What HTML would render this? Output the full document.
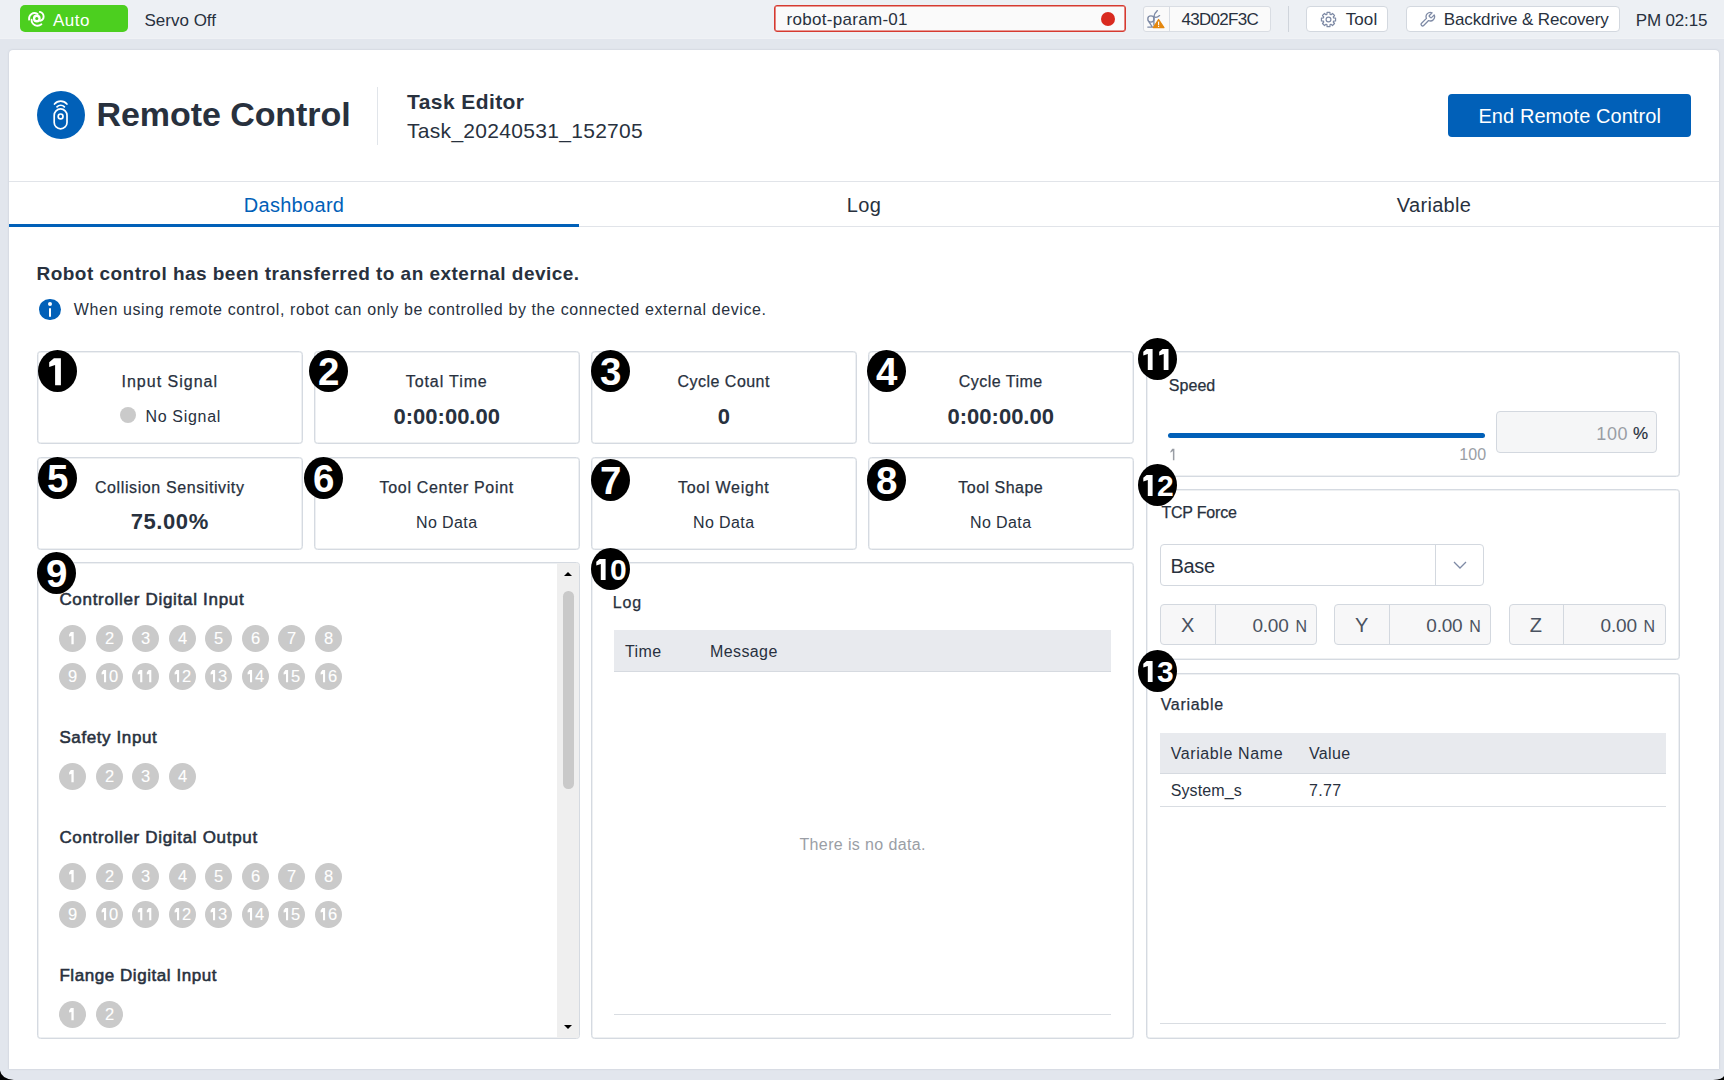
<!DOCTYPE html>
<html><head><meta charset="utf-8">
<style>
*{box-sizing:border-box;margin:0;padding:0}
html,body{width:1724px;height:1080px;overflow:hidden;background:#e2e6ed;font-family:"Liberation Sans",sans-serif;color:#28313e}
.a{position:absolute}
.t{position:absolute;white-space:nowrap}
.card{position:absolute;border:1px solid #d5dae1;box-shadow:inset 0 0 0 0.5px #dde1e6;border-radius:3.5px;background:#fff}
.dot{position:absolute;width:27.5px;height:27.5px;border-radius:50%;background:#cacaca;color:#fff;font-size:16px;line-height:28.5px;text-align:center}
.btn{position:absolute;background:#fff;border:1px solid #d3d8df;border-radius:4px}
.hline{position:absolute;height:1px;background:#e1e4e9}
.med{-webkit-text-stroke:0.25px #28313e}
.semi{-webkit-text-stroke:0.55px #28313e}
</style></head><body>
<div class="a" style="left:0;top:0;width:1724px;height:39px;background:#edf0f4"></div>
<div class="a" style="left:0;top:38px;width:1724px;height:1px;background:#f0f2f5"></div>
<div class="a" style="left:20px;top:5px;width:108px;height:27.3px;background:#4ccf1f;border-radius:5px"></div>
<svg class="a" style="left:24px;top:8px" width="26" height="22" viewBox="0 0 26 22" fill="none" stroke="#fff" stroke-width="1.9" stroke-linecap="round">
  <circle cx="12.8" cy="10.5" r="2.75" stroke-width="2.3"/>
  <path d="M5.1 11.6 C4.6 6.6 9.2 3.4 13.6 6.0"/>
  <path d="M15.8 3.9 C20.6 5.2 21.0 11.4 16.2 12.8"/>
  <path d="M7.6 11.6 C7.4 16.8 13.2 19.6 17.4 16.3"/>
</svg>
<div class="t" style="left:53.00px;top:12.00px;font-size:17px;line-height:17px;letter-spacing:0.5px;color:#fff;">Auto</div>
<div class="t" style="left:144.50px;top:12.00px;font-size:17px;line-height:17px;">Servo Off</div>
<div class="a" style="left:774px;top:5px;width:351.5px;height:27px;border:1px solid #d63a30;box-shadow:inset 0 0 0 0.6px #d63a30;border-radius:3px;background:#fafafa"></div>
<div class="t" style="left:786.50px;top:11.00px;font-size:17px;line-height:17px;letter-spacing:0.3px;">robot-param-01</div>
<div class="a" style="left:1100.6px;top:11.8px;width:14px;height:14px;border-radius:50%;background:#d92a1f"></div>
<div class="a" style="left:1142.5px;top:6px;width:128.5px;height:25.5px;border:1px solid #d9dde3;border-radius:3px;background:#fafafa"></div>
<div class="a" style="left:1169px;top:6px;width:1px;height:25.5px;background:#d9dde3"></div>
<svg class="a" style="left:1142px;top:6px" width="30" height="26" viewBox="0 0 30 26" fill="none" stroke="#7e8aa5" stroke-width="1.35" stroke-linecap="round">
  <circle cx="8.9" cy="13" r="3.1"/>
  <path d="M5.8 21.1 H10.8 M7 15.8 L10.3 21 M11.9 10.5 V19"/>
  <path d="M11.9 10.5 C12.2 8.2 13.6 6.3 15.4 4.6 M11.9 10.5 C13.4 12 15.5 11.4 17.6 9.6"/>
</svg>
<svg class="a" style="left:1142px;top:6px" width="30" height="26" viewBox="0 0 30 26">
  <path d="M16.6 13.5 L21.9 21.6 H11.3 Z" fill="#e4870e" stroke="#e4870e" stroke-width="1.3" stroke-linejoin="round"/>
  <rect x="16.05" y="15.6" width="1.1" height="3.7" fill="#fff"/><rect x="16.05" y="20.0" width="1.1" height="1.0" fill="#fff"/>
</svg>
<div class="t" style="left:1181.50px;top:11.00px;font-size:17px;line-height:17px;letter-spacing:-0.72px;">43D02F3C</div>
<div class="a" style="left:1288px;top:5.5px;width:1px;height:26.5px;background:#cfd4db"></div>
<div class="btn" style="left:1305.5px;top:5.5px;width:82.5px;height:26px"></div>
<svg class="a" style="left:1319.5px;top:10.5px" width="17" height="17" viewBox="0 0 24 24" fill="none" stroke="#7e8aa5" stroke-width="1.7" stroke-linejoin="round">
<path d="M19.26 9.75 L22.00 9.97 L22.00 14.03 L19.26 14.25 L18.72 15.55 L20.50 17.64 L17.64 20.50 L15.55 18.72 L14.25 19.26 L14.03 22.00 L9.97 22.00 L9.75 19.26 L8.45 18.72 L6.36 20.50 L3.50 17.64 L5.28 15.55 L4.74 14.25 L2.00 14.03 L2.00 9.97 L4.74 9.75 L5.28 8.45 L3.50 6.36 L6.36 3.50 L8.45 5.28 L9.75 4.74 L9.97 2.00 L14.03 2.00 L14.25 4.74 L15.55 5.28 L17.64 3.50 L20.50 6.36 L18.72 8.45Z"/>
<circle cx="12" cy="12" r="3.4"/>
</svg>
<div class="t" style="left:1345.70px;top:11.00px;font-size:17px;line-height:17px;letter-spacing:0.1px;">Tool</div>
<div class="btn" style="left:1405.5px;top:5.5px;width:214px;height:26px"></div>
<svg class="a" style="left:1419px;top:10.5px" width="17" height="17" viewBox="0 0 24 24" fill="none" stroke="#7e8aa5" stroke-width="1.8" stroke-linecap="round" stroke-linejoin="round">
<path d="M14.7 6.3a1 1 0 0 0 0 1.4l1.6 1.6a1 1 0 0 0 1.4 0l3.77-3.77a6 6 0 0 1-7.94 7.94l-6.91 6.91a2.12 2.12 0 0 1-3-3l6.91-6.91a6 6 0 0 1 7.94-7.94l-3.76 3.76z"/>
</svg>
<div class="t" style="left:1443.80px;top:11.00px;font-size:17px;line-height:17px;letter-spacing:-0.12px;">Backdrive &amp; Recovery</div>
<div class="t" style="left:1635.70px;top:12.00px;font-size:17px;line-height:17px;letter-spacing:-0.15px;">PM 02:15</div>
<div class="a" style="left:9px;top:50px;width:1710px;height:1019px;background:#fff;border-radius:4px 4px 0 0;box-shadow:0 0 2px rgba(120,130,150,.35)"></div>
<div class="a" style="left:37px;top:91px;width:48px;height:48px;border-radius:50%;background:#0160b8"></div>
<svg class="a" style="left:37px;top:91px" width="48" height="48" viewBox="0 0 48 48" fill="none" stroke="#fff" stroke-width="1.7" stroke-linecap="round">
  <path d="M17.5 13.0 A8 8 0 0 1 29.9 13.0"/>
  <path d="M20.0 15.9 A5 5 0 0 1 27.4 15.9"/>
  <rect x="17.2" y="17.9" width="12.8" height="19.9" rx="6.4"/>
  <circle cx="23.6" cy="25.4" r="2.4"/>
</svg>
<div class="t" style="left:96.50px;top:97.00px;font-size:34px;line-height:34px;letter-spacing:-0.07px;font-weight:700;">Remote Control</div>
<div class="a" style="left:377px;top:86.5px;width:1px;height:58.5px;background:#e1e5ea"></div>
<div class="t" style="left:407.00px;top:91.00px;font-size:21px;line-height:21px;letter-spacing:0.42px;font-weight:700;">Task Editor</div>
<div class="t" style="left:407.00px;top:120.00px;font-size:21px;line-height:21px;letter-spacing:0.3px;">Task_20240531_152705</div>
<div class="a" style="left:1448px;top:94.3px;width:243.4px;height:42.3px;background:#0160b8;border-radius:4px"></div>
<div class="t" style="left:1448.00px;top:106.00px;font-size:20px;line-height:20px;letter-spacing:0.07px;color:#fff;width:243.40px;text-align:center;">End Remote Control</div>
<div class="hline" style="left:9px;top:181px;width:1710px"></div>
<div class="t" style="left:9.00px;top:195.00px;font-size:20px;line-height:20px;letter-spacing:0.3px;color:#0160b8;width:570.00px;text-align:center;">Dashboard</div>
<div class="t" style="left:579.00px;top:195.00px;font-size:20px;line-height:20px;letter-spacing:0.3px;width:570.00px;text-align:center;">Log</div>
<div class="t" style="left:1149.00px;top:195.00px;font-size:20px;line-height:20px;letter-spacing:0.3px;width:570.00px;text-align:center;">Variable</div>
<div class="hline" style="left:9px;top:226px;width:1710px"></div>
<div class="a" style="left:9px;top:224px;width:570px;height:3px;background:#0160b8"></div>
<div class="t" style="left:36.50px;top:264.00px;font-size:19px;line-height:19px;letter-spacing:0.47px;font-weight:700;">Robot control has been transferred to an external device.</div>
<div class="a" style="left:38.9px;top:298.7px;width:21.8px;height:21.6px;border-radius:50%;background:#0160b8"></div>
<div class="a" style="left:48px;top:302.1px;width:4px;height:4px;border-radius:50%;background:#fff"></div>
<div class="a" style="left:48.7px;top:307.8px;width:2.6px;height:9px;border-radius:1.3px;background:#fff"></div>
<div class="t" style="left:73.70px;top:302.00px;font-size:16px;line-height:16px;letter-spacing:0.6px;">When using remote control, robot can only be controlled by the connected external device.</div>
<div class="card" style="left:37px;top:350.5px;width:265.5px;height:93.5px"></div>
<div class="t" style="left:37.00px;top:374.00px;font-size:16px;line-height:16px;letter-spacing:1.0px;width:265.50px;text-align:center;-webkit-text-stroke:0.25px #28313e;">Input Signal</div>
<div class="a" style="left:120.2px;top:406.9px;width:16.2px;height:16.2px;border-radius:50%;background:#cacaca"></div>
<div class="t" style="left:145.40px;top:409.00px;font-size:16px;line-height:16px;letter-spacing:0.69px;">No Signal</div>
<div class="card" style="left:314px;top:350.5px;width:265.5px;height:93.5px"></div>
<div class="t" style="left:314.00px;top:374.00px;font-size:16px;line-height:16px;letter-spacing:0.89px;width:265.50px;text-align:center;-webkit-text-stroke:0.25px #28313e;">Total Time</div>
<div class="t" style="left:314.00px;top:406.00px;font-size:22px;line-height:22px;font-weight:700;width:265.50px;text-align:center;">0:00:00.00</div>
<div class="card" style="left:591px;top:350.5px;width:265.5px;height:93.5px"></div>
<div class="t" style="left:591.00px;top:374.00px;font-size:16px;line-height:16px;letter-spacing:0.47px;width:265.50px;text-align:center;-webkit-text-stroke:0.25px #28313e;">Cycle Count</div>
<div class="t" style="left:591.00px;top:406.00px;font-size:22px;line-height:22px;font-weight:700;width:265.50px;text-align:center;">0</div>
<div class="card" style="left:868px;top:350.5px;width:265.5px;height:93.5px"></div>
<div class="t" style="left:868.00px;top:374.00px;font-size:16px;line-height:16px;letter-spacing:0.48px;width:265.50px;text-align:center;-webkit-text-stroke:0.25px #28313e;">Cycle Time</div>
<div class="t" style="left:868.00px;top:406.00px;font-size:22px;line-height:22px;font-weight:700;width:265.50px;text-align:center;">0:00:00.00</div>
<div class="card" style="left:37px;top:456.5px;width:265.5px;height:93.5px"></div>
<div class="t" style="left:37.00px;top:480.00px;font-size:16px;line-height:16px;letter-spacing:0.6px;width:265.50px;text-align:center;-webkit-text-stroke:0.25px #28313e;">Collision Sensitivity</div>
<div class="t" style="left:37.00px;top:511.00px;font-size:22px;line-height:22px;letter-spacing:0.6px;font-weight:700;width:265.50px;text-align:center;">75.00%</div>
<div class="card" style="left:314px;top:456.5px;width:265.5px;height:93.5px"></div>
<div class="t" style="left:314.00px;top:480.00px;font-size:16px;line-height:16px;letter-spacing:0.68px;width:265.50px;text-align:center;-webkit-text-stroke:0.25px #28313e;">Tool Center Point</div>
<div class="t" style="left:314.00px;top:515.00px;font-size:16px;line-height:16px;letter-spacing:0.42px;width:265.50px;text-align:center;">No Data</div>
<div class="card" style="left:591px;top:456.5px;width:265.5px;height:93.5px"></div>
<div class="t" style="left:591.00px;top:480.00px;font-size:16px;line-height:16px;letter-spacing:0.75px;width:265.50px;text-align:center;-webkit-text-stroke:0.25px #28313e;">Tool Weight</div>
<div class="t" style="left:591.00px;top:515.00px;font-size:16px;line-height:16px;letter-spacing:0.42px;width:265.50px;text-align:center;">No Data</div>
<div class="card" style="left:868px;top:456.5px;width:265.5px;height:93.5px"></div>
<div class="t" style="left:868.00px;top:480.00px;font-size:16px;line-height:16px;letter-spacing:0.48px;width:265.50px;text-align:center;-webkit-text-stroke:0.25px #28313e;">Tool Shape</div>
<div class="t" style="left:868.00px;top:515.00px;font-size:16px;line-height:16px;letter-spacing:0.42px;width:265.50px;text-align:center;">No Data</div>
<svg class="a" style="left:37.90px;top:349.80px;z-index:6" width="39" height="42" viewBox="0 0 39 42"><ellipse cx="19.5" cy="21" rx="19.5" ry="21" fill="#000"/><polygon points="15.90,8.20 22.90,8.20 22.90,35.20 17.10,35.20 17.10,15.00 11.20,17.10 11.20,12.20" fill="#fff"/></svg>
<svg class="a" style="left:308.90px;top:349.80px;z-index:6" width="39" height="42" viewBox="0 0 39 42"><ellipse cx="19.5" cy="21" rx="19.5" ry="21" fill="#000"/><text x="19.6" y="35.3" text-anchor="middle" font-family="Liberation Sans" font-weight="700" font-size="38.5" fill="#fff">2</text></svg>
<svg class="a" style="left:591.10px;top:350.00px;z-index:6" width="39" height="42" viewBox="0 0 39 42"><ellipse cx="19.5" cy="21" rx="19.5" ry="21" fill="#000"/><text x="19.6" y="35.3" text-anchor="middle" font-family="Liberation Sans" font-weight="700" font-size="38.5" fill="#fff">3</text></svg>
<svg class="a" style="left:867.00px;top:350.00px;z-index:6" width="39" height="42" viewBox="0 0 39 42"><ellipse cx="19.5" cy="21" rx="19.5" ry="21" fill="#000"/><text x="19.6" y="35.3" text-anchor="middle" font-family="Liberation Sans" font-weight="700" font-size="38.5" fill="#fff">4</text></svg>
<svg class="a" style="left:37.80px;top:456.90px;z-index:6" width="39" height="42" viewBox="0 0 39 42"><ellipse cx="19.5" cy="21" rx="19.5" ry="21" fill="#000"/><text x="19.6" y="35.3" text-anchor="middle" font-family="Liberation Sans" font-weight="700" font-size="38.5" fill="#fff">5</text></svg>
<svg class="a" style="left:303.90px;top:456.90px;z-index:6" width="39" height="42" viewBox="0 0 39 42"><ellipse cx="19.5" cy="21" rx="19.5" ry="21" fill="#000"/><text x="19.6" y="35.3" text-anchor="middle" font-family="Liberation Sans" font-weight="700" font-size="38.5" fill="#fff">6</text></svg>
<svg class="a" style="left:591.10px;top:458.90px;z-index:6" width="39" height="42" viewBox="0 0 39 42"><ellipse cx="19.5" cy="21" rx="19.5" ry="21" fill="#000"/><text x="19.6" y="35.3" text-anchor="middle" font-family="Liberation Sans" font-weight="700" font-size="38.5" fill="#fff">7</text></svg>
<svg class="a" style="left:867.00px;top:458.90px;z-index:6" width="39" height="42" viewBox="0 0 39 42"><ellipse cx="19.5" cy="21" rx="19.5" ry="21" fill="#000"/><text x="19.6" y="35.3" text-anchor="middle" font-family="Liberation Sans" font-weight="700" font-size="38.5" fill="#fff">8</text></svg>
<div class="card" style="left:37px;top:562px;width:542.5px;height:476.5px;overflow:hidden">
  <div class="a" style="left:519px;top:0;width:22px;height:475px;background:#efefef"></div>
  <div class="a" style="left:525.9px;top:8.8px;width:0;height:0;border-left:4.7px solid transparent;border-right:4.7px solid transparent;border-bottom:4.9px solid #000"></div>
  <div class="a" style="left:525px;top:28px;width:10.5px;height:198px;border-radius:5.25px;background:#c9c9c9"></div>
  <div class="a" style="left:525.9px;top:461.5px;width:0;height:0;border-left:4.7px solid transparent;border-right:4.7px solid transparent;border-top:4.9px solid #000"></div>
</div>
<svg class="a" style="left:37.00px;top:551.50px;z-index:6" width="39" height="42" viewBox="0 0 39 42"><ellipse cx="19.5" cy="21" rx="19.5" ry="21" fill="#000"/><text x="19.6" y="35.3" text-anchor="middle" font-family="Liberation Sans" font-weight="700" font-size="38.5" fill="#fff">9</text></svg>
<div class="t" style="left:59.40px;top:591.00px;font-size:17px;line-height:17px;letter-spacing:0.7px;-webkit-text-stroke:0.55px #28313e;">Controller Digital Input</div>
<div class="t" style="left:59.40px;top:729.00px;font-size:17px;line-height:17px;letter-spacing:0.6px;-webkit-text-stroke:0.55px #28313e;">Safety Input</div>
<div class="t" style="left:59.40px;top:829.00px;font-size:17px;line-height:17px;letter-spacing:0.68px;-webkit-text-stroke:0.55px #28313e;">Controller Digital Output</div>
<div class="t" style="left:59.40px;top:967.00px;font-size:17px;line-height:17px;letter-spacing:0.56px;-webkit-text-stroke:0.55px #28313e;">Flange Digital Input</div>
<svg class="a" style="left:59.30px;top:624.90px" width="27.0" height="27.0" viewBox="0 0 27.0 27.0"><circle cx="13.5" cy="13.5" r="13.5" fill="#cacaca"/><polygon points="11.80,7.00 14.70,7.00 14.70,19.25 12.40,19.25 12.40,10.90 10.10,11.40 10.10,9.40" fill="#fff"/></svg>
<svg class="a" style="left:95.80px;top:624.90px" width="27.0" height="27.0" viewBox="0 0 27.0 27.0"><circle cx="13.5" cy="13.5" r="13.5" fill="#cacaca"/><text x="13.60" y="19.25" text-anchor="middle" font-family="Liberation Sans" font-size="16.5" fill="#fff" stroke="#fff" stroke-width="0.12">2</text></svg>
<svg class="a" style="left:132.30px;top:624.90px" width="27.0" height="27.0" viewBox="0 0 27.0 27.0"><circle cx="13.5" cy="13.5" r="13.5" fill="#cacaca"/><text x="13.60" y="19.25" text-anchor="middle" font-family="Liberation Sans" font-size="16.5" fill="#fff" stroke="#fff" stroke-width="0.12">3</text></svg>
<svg class="a" style="left:168.80px;top:624.90px" width="27.0" height="27.0" viewBox="0 0 27.0 27.0"><circle cx="13.5" cy="13.5" r="13.5" fill="#cacaca"/><text x="13.60" y="19.25" text-anchor="middle" font-family="Liberation Sans" font-size="16.5" fill="#fff" stroke="#fff" stroke-width="0.12">4</text></svg>
<svg class="a" style="left:205.30px;top:624.90px" width="27.0" height="27.0" viewBox="0 0 27.0 27.0"><circle cx="13.5" cy="13.5" r="13.5" fill="#cacaca"/><text x="13.60" y="19.25" text-anchor="middle" font-family="Liberation Sans" font-size="16.5" fill="#fff" stroke="#fff" stroke-width="0.12">5</text></svg>
<svg class="a" style="left:241.80px;top:624.90px" width="27.0" height="27.0" viewBox="0 0 27.0 27.0"><circle cx="13.5" cy="13.5" r="13.5" fill="#cacaca"/><text x="13.60" y="19.25" text-anchor="middle" font-family="Liberation Sans" font-size="16.5" fill="#fff" stroke="#fff" stroke-width="0.12">6</text></svg>
<svg class="a" style="left:278.30px;top:624.90px" width="27.0" height="27.0" viewBox="0 0 27.0 27.0"><circle cx="13.5" cy="13.5" r="13.5" fill="#cacaca"/><text x="13.60" y="19.25" text-anchor="middle" font-family="Liberation Sans" font-size="16.5" fill="#fff" stroke="#fff" stroke-width="0.12">7</text></svg>
<svg class="a" style="left:314.80px;top:624.90px" width="27.0" height="27.0" viewBox="0 0 27.0 27.0"><circle cx="13.5" cy="13.5" r="13.5" fill="#cacaca"/><text x="13.60" y="19.25" text-anchor="middle" font-family="Liberation Sans" font-size="16.5" fill="#fff" stroke="#fff" stroke-width="0.12">8</text></svg>
<svg class="a" style="left:59.30px;top:662.90px" width="27.0" height="27.0" viewBox="0 0 27.0 27.0"><circle cx="13.5" cy="13.5" r="13.5" fill="#cacaca"/><text x="13.60" y="19.25" text-anchor="middle" font-family="Liberation Sans" font-size="16.5" fill="#fff" stroke="#fff" stroke-width="0.12">9</text></svg>
<svg class="a" style="left:95.80px;top:662.90px" width="27.0" height="27.0" viewBox="0 0 27.0 27.0"><circle cx="13.5" cy="13.5" r="13.5" fill="#cacaca"/><polygon points="7.40,7.00 10.10,7.00 10.10,19.25 8.00,19.25 8.00,10.90 5.60,11.40 5.60,9.40" fill="#fff"/><text x="17.70" y="19.25" text-anchor="middle" font-family="Liberation Sans" font-size="16.5" fill="#fff" stroke="#fff" stroke-width="0.12">0</text></svg>
<svg class="a" style="left:132.30px;top:662.90px" width="27.0" height="27.0" viewBox="0 0 27.0 27.0"><circle cx="13.5" cy="13.5" r="13.5" fill="#cacaca"/><polygon points="7.60,7.00 10.30,7.00 10.30,19.25 8.20,19.25 8.20,10.90 5.80,11.40 5.80,9.40" fill="#fff"/><polygon points="16.60,7.00 19.30,7.00 19.30,19.25 17.20,19.25 17.20,10.90 14.80,11.40 14.80,9.40" fill="#fff"/></svg>
<svg class="a" style="left:168.80px;top:662.90px" width="27.0" height="27.0" viewBox="0 0 27.0 27.0"><circle cx="13.5" cy="13.5" r="13.5" fill="#cacaca"/><polygon points="7.40,7.00 10.10,7.00 10.10,19.25 8.00,19.25 8.00,10.90 5.60,11.40 5.60,9.40" fill="#fff"/><text x="17.70" y="19.25" text-anchor="middle" font-family="Liberation Sans" font-size="16.5" fill="#fff" stroke="#fff" stroke-width="0.12">2</text></svg>
<svg class="a" style="left:205.30px;top:662.90px" width="27.0" height="27.0" viewBox="0 0 27.0 27.0"><circle cx="13.5" cy="13.5" r="13.5" fill="#cacaca"/><polygon points="7.40,7.00 10.10,7.00 10.10,19.25 8.00,19.25 8.00,10.90 5.60,11.40 5.60,9.40" fill="#fff"/><text x="17.70" y="19.25" text-anchor="middle" font-family="Liberation Sans" font-size="16.5" fill="#fff" stroke="#fff" stroke-width="0.12">3</text></svg>
<svg class="a" style="left:241.80px;top:662.90px" width="27.0" height="27.0" viewBox="0 0 27.0 27.0"><circle cx="13.5" cy="13.5" r="13.5" fill="#cacaca"/><polygon points="7.40,7.00 10.10,7.00 10.10,19.25 8.00,19.25 8.00,10.90 5.60,11.40 5.60,9.40" fill="#fff"/><text x="17.70" y="19.25" text-anchor="middle" font-family="Liberation Sans" font-size="16.5" fill="#fff" stroke="#fff" stroke-width="0.12">4</text></svg>
<svg class="a" style="left:278.30px;top:662.90px" width="27.0" height="27.0" viewBox="0 0 27.0 27.0"><circle cx="13.5" cy="13.5" r="13.5" fill="#cacaca"/><polygon points="7.40,7.00 10.10,7.00 10.10,19.25 8.00,19.25 8.00,10.90 5.60,11.40 5.60,9.40" fill="#fff"/><text x="17.70" y="19.25" text-anchor="middle" font-family="Liberation Sans" font-size="16.5" fill="#fff" stroke="#fff" stroke-width="0.12">5</text></svg>
<svg class="a" style="left:314.80px;top:662.90px" width="27.0" height="27.0" viewBox="0 0 27.0 27.0"><circle cx="13.5" cy="13.5" r="13.5" fill="#cacaca"/><polygon points="7.40,7.00 10.10,7.00 10.10,19.25 8.00,19.25 8.00,10.90 5.60,11.40 5.60,9.40" fill="#fff"/><text x="17.70" y="19.25" text-anchor="middle" font-family="Liberation Sans" font-size="16.5" fill="#fff" stroke="#fff" stroke-width="0.12">6</text></svg>
<svg class="a" style="left:59.30px;top:763.00px" width="27.0" height="27.0" viewBox="0 0 27.0 27.0"><circle cx="13.5" cy="13.5" r="13.5" fill="#cacaca"/><polygon points="11.80,7.00 14.70,7.00 14.70,19.25 12.40,19.25 12.40,10.90 10.10,11.40 10.10,9.40" fill="#fff"/></svg>
<svg class="a" style="left:95.80px;top:763.00px" width="27.0" height="27.0" viewBox="0 0 27.0 27.0"><circle cx="13.5" cy="13.5" r="13.5" fill="#cacaca"/><text x="13.60" y="19.25" text-anchor="middle" font-family="Liberation Sans" font-size="16.5" fill="#fff" stroke="#fff" stroke-width="0.12">2</text></svg>
<svg class="a" style="left:132.30px;top:763.00px" width="27.0" height="27.0" viewBox="0 0 27.0 27.0"><circle cx="13.5" cy="13.5" r="13.5" fill="#cacaca"/><text x="13.60" y="19.25" text-anchor="middle" font-family="Liberation Sans" font-size="16.5" fill="#fff" stroke="#fff" stroke-width="0.12">3</text></svg>
<svg class="a" style="left:168.80px;top:763.00px" width="27.0" height="27.0" viewBox="0 0 27.0 27.0"><circle cx="13.5" cy="13.5" r="13.5" fill="#cacaca"/><text x="13.60" y="19.25" text-anchor="middle" font-family="Liberation Sans" font-size="16.5" fill="#fff" stroke="#fff" stroke-width="0.12">4</text></svg>
<svg class="a" style="left:59.30px;top:863.20px" width="27.0" height="27.0" viewBox="0 0 27.0 27.0"><circle cx="13.5" cy="13.5" r="13.5" fill="#cacaca"/><polygon points="11.80,7.00 14.70,7.00 14.70,19.25 12.40,19.25 12.40,10.90 10.10,11.40 10.10,9.40" fill="#fff"/></svg>
<svg class="a" style="left:95.80px;top:863.20px" width="27.0" height="27.0" viewBox="0 0 27.0 27.0"><circle cx="13.5" cy="13.5" r="13.5" fill="#cacaca"/><text x="13.60" y="19.25" text-anchor="middle" font-family="Liberation Sans" font-size="16.5" fill="#fff" stroke="#fff" stroke-width="0.12">2</text></svg>
<svg class="a" style="left:132.30px;top:863.20px" width="27.0" height="27.0" viewBox="0 0 27.0 27.0"><circle cx="13.5" cy="13.5" r="13.5" fill="#cacaca"/><text x="13.60" y="19.25" text-anchor="middle" font-family="Liberation Sans" font-size="16.5" fill="#fff" stroke="#fff" stroke-width="0.12">3</text></svg>
<svg class="a" style="left:168.80px;top:863.20px" width="27.0" height="27.0" viewBox="0 0 27.0 27.0"><circle cx="13.5" cy="13.5" r="13.5" fill="#cacaca"/><text x="13.60" y="19.25" text-anchor="middle" font-family="Liberation Sans" font-size="16.5" fill="#fff" stroke="#fff" stroke-width="0.12">4</text></svg>
<svg class="a" style="left:205.30px;top:863.20px" width="27.0" height="27.0" viewBox="0 0 27.0 27.0"><circle cx="13.5" cy="13.5" r="13.5" fill="#cacaca"/><text x="13.60" y="19.25" text-anchor="middle" font-family="Liberation Sans" font-size="16.5" fill="#fff" stroke="#fff" stroke-width="0.12">5</text></svg>
<svg class="a" style="left:241.80px;top:863.20px" width="27.0" height="27.0" viewBox="0 0 27.0 27.0"><circle cx="13.5" cy="13.5" r="13.5" fill="#cacaca"/><text x="13.60" y="19.25" text-anchor="middle" font-family="Liberation Sans" font-size="16.5" fill="#fff" stroke="#fff" stroke-width="0.12">6</text></svg>
<svg class="a" style="left:278.30px;top:863.20px" width="27.0" height="27.0" viewBox="0 0 27.0 27.0"><circle cx="13.5" cy="13.5" r="13.5" fill="#cacaca"/><text x="13.60" y="19.25" text-anchor="middle" font-family="Liberation Sans" font-size="16.5" fill="#fff" stroke="#fff" stroke-width="0.12">7</text></svg>
<svg class="a" style="left:314.80px;top:863.20px" width="27.0" height="27.0" viewBox="0 0 27.0 27.0"><circle cx="13.5" cy="13.5" r="13.5" fill="#cacaca"/><text x="13.60" y="19.25" text-anchor="middle" font-family="Liberation Sans" font-size="16.5" fill="#fff" stroke="#fff" stroke-width="0.12">8</text></svg>
<svg class="a" style="left:59.30px;top:901.20px" width="27.0" height="27.0" viewBox="0 0 27.0 27.0"><circle cx="13.5" cy="13.5" r="13.5" fill="#cacaca"/><text x="13.60" y="19.25" text-anchor="middle" font-family="Liberation Sans" font-size="16.5" fill="#fff" stroke="#fff" stroke-width="0.12">9</text></svg>
<svg class="a" style="left:95.80px;top:901.20px" width="27.0" height="27.0" viewBox="0 0 27.0 27.0"><circle cx="13.5" cy="13.5" r="13.5" fill="#cacaca"/><polygon points="7.40,7.00 10.10,7.00 10.10,19.25 8.00,19.25 8.00,10.90 5.60,11.40 5.60,9.40" fill="#fff"/><text x="17.70" y="19.25" text-anchor="middle" font-family="Liberation Sans" font-size="16.5" fill="#fff" stroke="#fff" stroke-width="0.12">0</text></svg>
<svg class="a" style="left:132.30px;top:901.20px" width="27.0" height="27.0" viewBox="0 0 27.0 27.0"><circle cx="13.5" cy="13.5" r="13.5" fill="#cacaca"/><polygon points="7.60,7.00 10.30,7.00 10.30,19.25 8.20,19.25 8.20,10.90 5.80,11.40 5.80,9.40" fill="#fff"/><polygon points="16.60,7.00 19.30,7.00 19.30,19.25 17.20,19.25 17.20,10.90 14.80,11.40 14.80,9.40" fill="#fff"/></svg>
<svg class="a" style="left:168.80px;top:901.20px" width="27.0" height="27.0" viewBox="0 0 27.0 27.0"><circle cx="13.5" cy="13.5" r="13.5" fill="#cacaca"/><polygon points="7.40,7.00 10.10,7.00 10.10,19.25 8.00,19.25 8.00,10.90 5.60,11.40 5.60,9.40" fill="#fff"/><text x="17.70" y="19.25" text-anchor="middle" font-family="Liberation Sans" font-size="16.5" fill="#fff" stroke="#fff" stroke-width="0.12">2</text></svg>
<svg class="a" style="left:205.30px;top:901.20px" width="27.0" height="27.0" viewBox="0 0 27.0 27.0"><circle cx="13.5" cy="13.5" r="13.5" fill="#cacaca"/><polygon points="7.40,7.00 10.10,7.00 10.10,19.25 8.00,19.25 8.00,10.90 5.60,11.40 5.60,9.40" fill="#fff"/><text x="17.70" y="19.25" text-anchor="middle" font-family="Liberation Sans" font-size="16.5" fill="#fff" stroke="#fff" stroke-width="0.12">3</text></svg>
<svg class="a" style="left:241.80px;top:901.20px" width="27.0" height="27.0" viewBox="0 0 27.0 27.0"><circle cx="13.5" cy="13.5" r="13.5" fill="#cacaca"/><polygon points="7.40,7.00 10.10,7.00 10.10,19.25 8.00,19.25 8.00,10.90 5.60,11.40 5.60,9.40" fill="#fff"/><text x="17.70" y="19.25" text-anchor="middle" font-family="Liberation Sans" font-size="16.5" fill="#fff" stroke="#fff" stroke-width="0.12">4</text></svg>
<svg class="a" style="left:278.30px;top:901.20px" width="27.0" height="27.0" viewBox="0 0 27.0 27.0"><circle cx="13.5" cy="13.5" r="13.5" fill="#cacaca"/><polygon points="7.40,7.00 10.10,7.00 10.10,19.25 8.00,19.25 8.00,10.90 5.60,11.40 5.60,9.40" fill="#fff"/><text x="17.70" y="19.25" text-anchor="middle" font-family="Liberation Sans" font-size="16.5" fill="#fff" stroke="#fff" stroke-width="0.12">5</text></svg>
<svg class="a" style="left:314.80px;top:901.20px" width="27.0" height="27.0" viewBox="0 0 27.0 27.0"><circle cx="13.5" cy="13.5" r="13.5" fill="#cacaca"/><polygon points="7.40,7.00 10.10,7.00 10.10,19.25 8.00,19.25 8.00,10.90 5.60,11.40 5.60,9.40" fill="#fff"/><text x="17.70" y="19.25" text-anchor="middle" font-family="Liberation Sans" font-size="16.5" fill="#fff" stroke="#fff" stroke-width="0.12">6</text></svg>
<svg class="a" style="left:59.30px;top:1001.20px" width="27.0" height="27.0" viewBox="0 0 27.0 27.0"><circle cx="13.5" cy="13.5" r="13.5" fill="#cacaca"/><polygon points="11.80,7.00 14.70,7.00 14.70,19.25 12.40,19.25 12.40,10.90 10.10,11.40 10.10,9.40" fill="#fff"/></svg>
<svg class="a" style="left:95.80px;top:1001.20px" width="27.0" height="27.0" viewBox="0 0 27.0 27.0"><circle cx="13.5" cy="13.5" r="13.5" fill="#cacaca"/><text x="13.60" y="19.25" text-anchor="middle" font-family="Liberation Sans" font-size="16.5" fill="#fff" stroke="#fff" stroke-width="0.12">2</text></svg>
<div class="card" style="left:591px;top:562px;width:542.5px;height:476.5px"></div>
<svg class="a" style="left:591.00px;top:547.50px;z-index:6" width="39" height="42" viewBox="0 0 39 42"><ellipse cx="19.5" cy="21" rx="19.5" ry="21" fill="#000"/><polygon points="8.60,10.90 14.60,10.90 14.60,32.00 9.80,32.00 9.80,16.00 5.30,17.50 5.30,13.70" fill="#fff"/><text x="27.3" y="32.1" text-anchor="middle" font-family="Liberation Sans" font-weight="700" font-size="30" fill="#fff">0</text></svg>
<div class="t" style="left:612.80px;top:595.00px;font-size:16px;line-height:16px;letter-spacing:0.8px;-webkit-text-stroke:0.25px #28313e;">Log</div>
<div class="a" style="left:613.8px;top:630px;width:497.7px;height:42px;background:#e8eaee;border-bottom:1px solid #d6dae0"></div>
<div class="t" style="left:624.90px;top:644.00px;font-size:16px;line-height:16px;letter-spacing:0.4px;">Time</div>
<div class="t" style="left:710.00px;top:644.00px;font-size:16px;line-height:16px;letter-spacing:0.4px;">Message</div>
<div class="t" style="left:613.80px;top:837.00px;font-size:16px;line-height:16px;letter-spacing:0.37px;color:#9a9ea5;width:497.70px;text-align:center;">There is no data.</div>
<div class="hline" style="left:613.8px;top:1014px;width:497.7px;background:#d9dde2"></div>
<div class="card" style="left:1146px;top:350.5px;width:534px;height:126px"></div>
<svg class="a" style="left:1138.10px;top:337.90px;z-index:6" width="39" height="42" viewBox="0 0 39 42"><ellipse cx="19.5" cy="21" rx="19.5" ry="21" fill="#000"/><polygon points="8.60,10.90 14.60,10.90 14.60,32.00 9.80,32.00 9.80,16.00 5.30,17.50 5.30,13.70" fill="#fff"/><polygon points="24.50,10.90 30.50,10.90 30.50,32.00 25.70,32.00 25.70,16.00 21.20,17.50 21.20,13.70" fill="#fff"/></svg>
<div class="t" style="left:1168.70px;top:378.00px;font-size:16px;line-height:16px;letter-spacing:0.08px;-webkit-text-stroke:0.25px #28313e;">Speed</div>
<div class="a" style="left:1168px;top:432.5px;width:317px;height:5.5px;border-radius:3px;background:#0160b8"></div>
<svg class="a" style="left:1165px;top:445px" width="14" height="18" viewBox="0 0 14 18"><polygon points="7.2,3.8 9.4,3.8 9.4,15.3 7.9,15.3 7.9,5.9 5.5,7.7 5.4,6.6" fill="#9a9ea5"/></svg>
<div class="t" style="left:1459.20px;top:447.00px;font-size:16px;line-height:16px;letter-spacing:0.1px;color:#9a9ea5;">100</div>
<div class="a" style="left:1496px;top:411.3px;width:161.3px;height:42px;border:1px solid #d3d8df;border-radius:4px;background:#f5f6f7"></div>
<div class="t" style="left:1596.20px;top:425.00px;font-size:18px;line-height:18px;letter-spacing:0.68px;color:#9a9ea5;">100</div>
<div class="t" style="left:1633.00px;top:425.00px;font-size:17px;line-height:17px;-webkit-text-stroke:0.2px #28313e;">%</div>
<div class="card" style="left:1146px;top:488.5px;width:534px;height:171.5px"></div>
<svg class="a" style="left:1137.90px;top:464.00px;z-index:6" width="39" height="42" viewBox="0 0 39 42"><ellipse cx="19.5" cy="21" rx="19.5" ry="21" fill="#000"/><polygon points="8.60,10.90 14.60,10.90 14.60,32.00 9.80,32.00 9.80,16.00 5.30,17.50 5.30,13.70" fill="#fff"/><text x="27.3" y="32.1" text-anchor="middle" font-family="Liberation Sans" font-weight="700" font-size="30" fill="#fff">2</text></svg>
<div class="t" style="left:1161.40px;top:505.00px;font-size:16px;line-height:16px;letter-spacing:-0.2px;-webkit-text-stroke:0.25px #28313e;">TCP Force</div>
<div class="a" style="left:1160.4px;top:544px;width:323.7px;height:41.6px;border:1px solid #d3d8df;border-radius:4px;background:#fff"></div>
<div class="a" style="left:1435px;top:544px;width:1px;height:41.6px;background:#d3d8df"></div>
<svg class="a" style="left:1453px;top:561px" width="14" height="8" viewBox="0 0 14 8" fill="none" stroke="#7e8aa5" stroke-width="1.3"><path d="M1 1 L7 7 L13 1"/></svg>
<div class="t" style="left:1170.50px;top:556.00px;font-size:20px;line-height:20px;letter-spacing:-0.35px;">Base</div>
<div class="a" style="left:1160.4px;top:603.5px;width:157px;height:41.5px;border:1px solid #d3d8df;border-radius:4px;background:#f7f7f8"></div>
<div class="a" style="left:1214.9px;top:603.5px;width:1px;height:41.5px;background:#d3d8df"></div>
<div class="t" style="left:1160.40px;top:615.00px;font-size:20px;line-height:20px;color:#4a5260;width:54.50px;text-align:center;">X</div>
<div class="t" style="left:1252.40px;top:616.00px;font-size:19px;line-height:19px;letter-spacing:-0.2px;color:#4a5260;">0.00</div>
<div class="t" style="left:1295.40px;top:619.00px;font-size:16px;line-height:16px;color:#4a5260;">N</div>
<div class="a" style="left:1334.3px;top:603.5px;width:157px;height:41.5px;border:1px solid #d3d8df;border-radius:4px;background:#f7f7f8"></div>
<div class="a" style="left:1388.8px;top:603.5px;width:1px;height:41.5px;background:#d3d8df"></div>
<div class="t" style="left:1334.30px;top:615.00px;font-size:20px;line-height:20px;color:#4a5260;width:54.50px;text-align:center;">Y</div>
<div class="t" style="left:1426.30px;top:616.00px;font-size:19px;line-height:19px;letter-spacing:-0.2px;color:#4a5260;">0.00</div>
<div class="t" style="left:1469.30px;top:619.00px;font-size:16px;line-height:16px;color:#4a5260;">N</div>
<div class="a" style="left:1508.6px;top:603.5px;width:157px;height:41.5px;border:1px solid #d3d8df;border-radius:4px;background:#f7f7f8"></div>
<div class="a" style="left:1563.1px;top:603.5px;width:1px;height:41.5px;background:#d3d8df"></div>
<div class="t" style="left:1508.60px;top:615.00px;font-size:20px;line-height:20px;color:#4a5260;width:54.50px;text-align:center;">Z</div>
<div class="t" style="left:1600.60px;top:616.00px;font-size:19px;line-height:19px;letter-spacing:-0.2px;color:#4a5260;">0.00</div>
<div class="t" style="left:1643.60px;top:619.00px;font-size:16px;line-height:16px;color:#4a5260;">N</div>
<div class="card" style="left:1146px;top:673px;width:534px;height:366px"></div>
<svg class="a" style="left:1138.00px;top:649.80px;z-index:6" width="39" height="42" viewBox="0 0 39 42"><ellipse cx="19.5" cy="21" rx="19.5" ry="21" fill="#000"/><polygon points="8.60,10.90 14.60,10.90 14.60,32.00 9.80,32.00 9.80,16.00 5.30,17.50 5.30,13.70" fill="#fff"/><text x="27.3" y="32.1" text-anchor="middle" font-family="Liberation Sans" font-weight="700" font-size="30" fill="#fff">3</text></svg>
<div class="t" style="left:1160.70px;top:697.00px;font-size:16px;line-height:16px;letter-spacing:0.7px;-webkit-text-stroke:0.25px #28313e;">Variable</div>
<div class="a" style="left:1160px;top:732.6px;width:506px;height:41.4px;background:#e8eaee;border-bottom:1px solid #d6dae0"></div>
<div class="t" style="left:1170.70px;top:746.00px;font-size:16px;line-height:16px;letter-spacing:0.6px;">Variable Name</div>
<div class="t" style="left:1308.90px;top:746.00px;font-size:16px;line-height:16px;letter-spacing:0.4px;">Value</div>
<div class="t" style="left:1170.70px;top:783.00px;font-size:16px;line-height:16px;letter-spacing:0.1px;">System_s</div>
<div class="t" style="left:1308.90px;top:783.00px;font-size:16px;line-height:16px;letter-spacing:0.4px;">7.77</div>
<div class="hline" style="left:1160px;top:806px;width:506px;background:#d9dde2"></div>
<div class="hline" style="left:1160px;top:1023px;width:506px;background:#d9dde2"></div>
<svg class="a" style="left:0;top:1066px;z-index:20" width="20" height="14" viewBox="0 0 20 14"><path d="M0 4.5 Q1.5 13 14 14 H0 Z" fill="#000"/></svg>
<svg class="a" style="left:1704px;top:1070px;z-index:20" width="20" height="10" viewBox="0 0 20 10"><path d="M20 6 Q18.5 9.6 9 10 H20 Z" fill="#000"/></svg>
</body></html>
